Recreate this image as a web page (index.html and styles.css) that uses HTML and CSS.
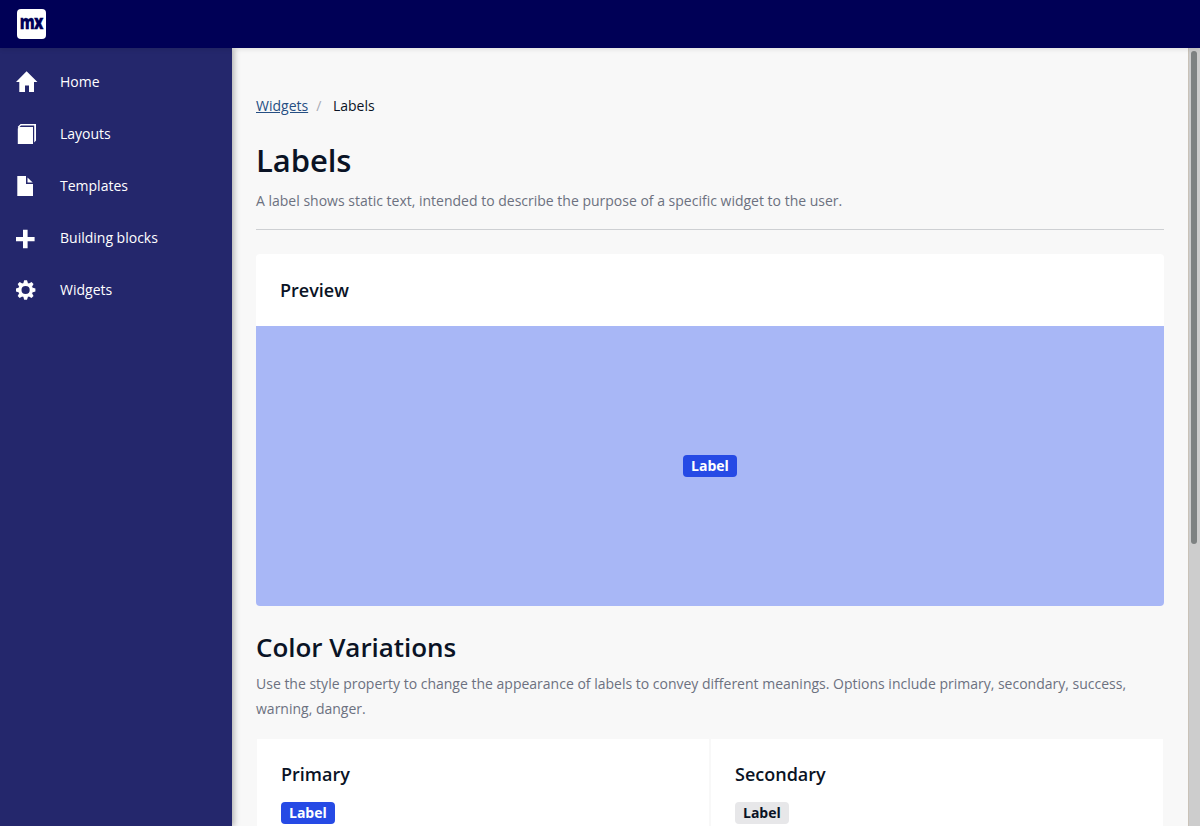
FILE: index.html
```html
<!DOCTYPE html>
<html lang="en">
<head>
<meta charset="utf-8">
<title>Labels</title>
<link rel="stylesheet" href="styles.css">
</head>
<body>
<header class="topbar"><div class="logo"><span>mx</span></div></header>
<div class="shell">
  <nav class="sidebar">
    <a class="nav-item"><svg class="icon" viewBox="0 0 24 24"><path d="M10.6 1.2 21.4 12H18V22H13V15.5H9V22H3.3V12H0z"/></svg>Home</a>
    <a class="nav-item"><svg class="icon" viewBox="0 0 24 24"><path d="M1.8 6.6 3.4 5H17V22H1.8z"/><path d="M1.8 4.8 4.6 2H20V18.6L18.2 20.4V3.6H5L2.2 6.2z"/></svg>Layouts</a>
    <a class="nav-item"><svg class="icon" viewBox="0 0 24 24"><path d="M1.3 2H10V10H17V22H1.3z"/><path d="M11.5 3.4 16.7 8.6H11.5z"/></svg>Templates</a>
    <a class="nav-item"><svg class="icon" viewBox="0 0 24 24"><path d="M7 3.8H11.6V11H18.6V15.2H11.6V22.2H7V15.2H0V11H7z" /></svg>Building blocks</a>
    <a class="nav-item"><svg class="icon" viewBox="0 0 24 24"><g transform="translate(9.6 12)"><circle r="5.7" fill="none" stroke="#fff" stroke-width="3.2"/><path id="tooth" d="M-1.4-9.8H1.4L2.4-6.5H-2.4z"/><use href="#tooth" transform="rotate(45)"/><use href="#tooth" transform="rotate(90)"/><use href="#tooth" transform="rotate(135)"/><use href="#tooth" transform="rotate(180)"/><use href="#tooth" transform="rotate(225)"/><use href="#tooth" transform="rotate(270)"/><use href="#tooth" transform="rotate(315)"/></g></svg>Widgets</a>
  </nav>
  <main class="content">
    <div class="breadcrumb"><a class="crumb-link">Widgets</a><span class="slash">/</span><span>Labels</span></div>
    <h1 class="title">Labels</h1>
    <p class="lead">A label shows static text, intended to describe the purpose of a specific widget to the user.</p>
    <hr class="rule">
    <section class="preview">
      <h4 class="card-title preview-head">Preview</h4>
      <div class="stage"><span class="label primary">Label</span></div>
    </section>
    <h2 class="subtitle">Color Variations</h2>
    <p class="lead">Use the style property to change the appearance of labels to convey different meanings. Options include primary, secondary, success, warning, danger.</p>
    <div class="grid">
      <div class="card"><h4 class="card-title">Primary</h4><span class="label primary">Label</span></div>
      <div class="card"><h4 class="card-title">Secondary</h4><span class="label secondary">Label</span></div>
    </div>
  </main>
  <div class="scrollbar"><div class="thumb"></div></div>
</div>
</body>
</html>
```
FILE: styles.css
```css
* { box-sizing: border-box; }
body { margin: 0; height: 826px; overflow: hidden; display: flex; flex-direction: column; font: 14px/20px "Open Sans", sans-serif; color: #0a1325; background: #f8f8f8; }
h1, h2, h4, p { margin: 0; }
.topbar { height: 48px; flex: none; background: #000056; padding: 9px 17px; position: relative; z-index: 1; box-shadow: 0 1px 5px rgba(0,0,0,.12); }
.logo { width: 29px; height: 30px; border-radius: 4px; background: #fff; color: #000056; display: flex; align-items: center; justify-content: center; font: 800 20px/20px "Open Sans", sans-serif; letter-spacing: -1px; }
.logo span { transform: translateY(-2px) scaleX(.75); -webkit-text-stroke: .3px #000056; }
.shell { flex: 1; min-height: 0; display: flex; }
.sidebar { position: relative; width: 232px; flex: none; background: #24276c; padding-top: 8px; box-shadow: 2px 0 6px rgba(0,0,0,.3); }
.nav-item { display: flex; align-items: center; height: 52px; padding-left: 16px; color: #fff; }
.icon { width: 24px; height: 24px; margin-right: 20px; fill: #fff; }
.content { flex: 1; min-width: 0; padding: 48px 24px 0; overflow: hidden; }
.breadcrumb { display: flex; height: 20px; }
.crumb-link { color: #264f83; text-decoration: underline; }
.slash { color: #a8abb5; margin: 0 11.6px 0 8px; }
.title { font-size: 31px; font-weight: 600; line-height: 40px; margin-top: 24px; letter-spacing: -.08px; }
.lead { color: #6c7180; line-height: 25px; }
.title + .lead { margin-top: 8px; }
.rule { border: 0; height: 1px; background: #ced0d3; margin: 16px 0 24px; }
.preview { background: #fff; border-radius: 4px; overflow: hidden; height: 352px; }
.card-title { font-size: 18px; font-weight: 600; line-height: 24px; }
.preview-head { padding: 24px; }
.stage { height: 280px; background: #a8b7f6; display: flex; align-items: center; justify-content: center; }
.label { display: inline-block; height: 22px; padding: 0 8px; border-radius: 4px; font-size: 14px; font-weight: 700; line-height: 22px; }
.primary { background: #264ae5; color: #fff; }
.secondary { background: #e7e7e9; color: #0a1325; }
.subtitle { font-size: 26px; font-weight: 600; line-height: 36px; margin: 23px 0 6px; letter-spacing: -.04px; }
.grid { display: grid; grid-template-columns: 1fr 1fr; gap: 2px; margin: 18px 1px 0; }
.card { background: #fff; padding: 23px 24px; height: 120px; }
.card .card-title { margin-bottom: 16px; }
.card .label { display: block; width: fit-content; }
.scrollbar { width: 12px; flex: none; background: #cdcdcd; border-left: 1px solid #c9c2b8; padding: 3px 3px 0 2px; }
.thumb { width: 6px; height: 493px; border-radius: 3px; background: #7e8282; }
```
